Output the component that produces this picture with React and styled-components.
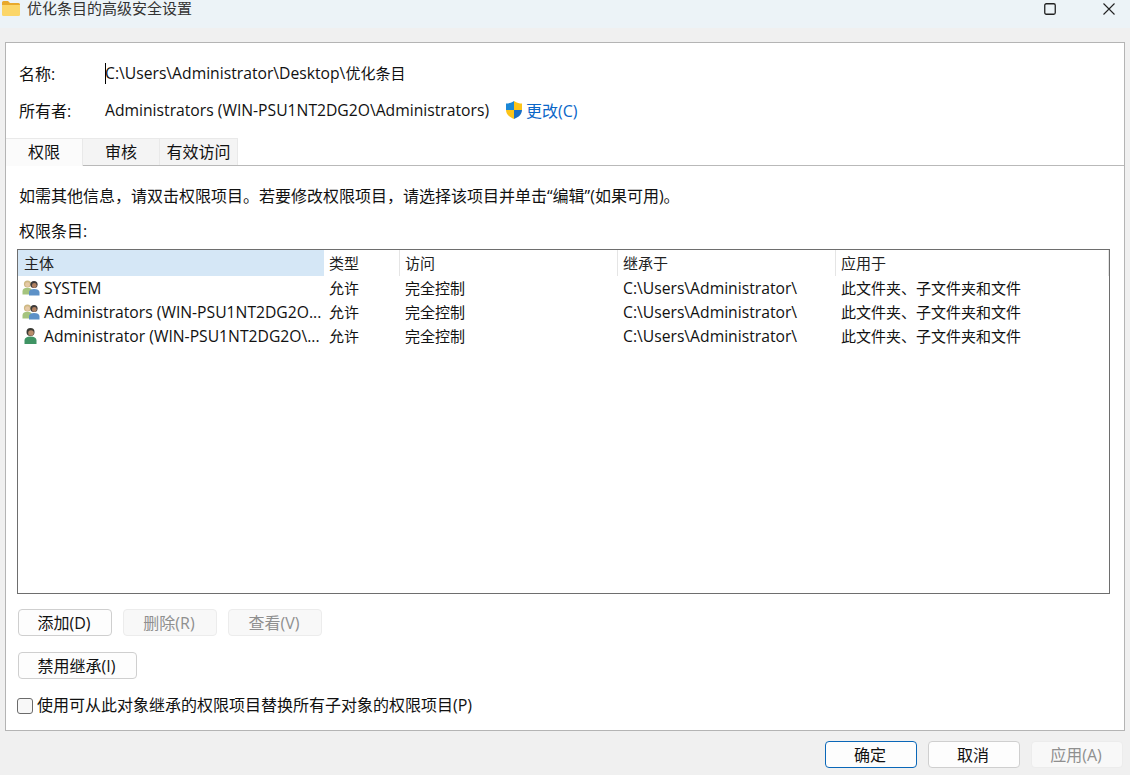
import React from 'react'
import styled, { createGlobalStyle } from 'styled-components'

const GlobalStyle = createGlobalStyle`
  html, body { margin: 0; padding: 0; background: #f0f0f0; }
  body {
    font-family: "Open Sans", "Noto Sans CJK SC", sans-serif;
    font-size: 16px;
    color: #111;
  }
`

const Window = styled.div`
  width: 1130px;
  height: 775px;
  display: flex;
  flex-direction: column;
  overflow: hidden;
  background: #f0f0f0;
`

const TitleBar = styled.div`
  height: 28px;
  flex: none;
  display: flex;
  align-items: flex-start;
  background: #ecf3f7;
  padding-left: 1px;
`

const TitleText = styled.span`
  margin-left: 6px;
  line-height: 17px;
  font-size: 15px;
  color: #333;
`

const WindowControls = styled.div`
  margin-left: auto;
  display: flex;
  gap: 47px;
  padding: 3px 15px 0 0;
  svg { display: block; }
`

const Panel = styled.div`
  margin: 14px 5px 0;
  height: 689px;
  flex: none;
  box-sizing: border-box;
  background: #fff;
  border: 1px solid #b4b4b4;
  display: flex;
  flex-direction: column;
`

const InfoRow = styled.div`
  display: flex;
  align-items: center;
  height: 24px;
  padding-left: 13px;
  margin-top: ${p => p.$top}px;
`

const InfoLabel = styled.span`
  width: 86px;
  flex: none;
`

// the Latin text of the original runs a little narrower than the CJK size next to it
const Latin = styled.span`
  font-size: 15.7px;
`

const PathValue = styled.span`
  position: relative;
  font-size: 15px;
  &::before {
    content: '';
    position: absolute;
    left: 0;
    top: 1px;
    bottom: 0;
    border-left: 1px solid #000;
  }
`

const ChangeLink = styled.span`
  margin-left: 15px;
  display: inline-flex;
  align-items: center;
  gap: 2px;
  color: #0a66c8;
`

const TabStrip = styled.div`
  margin-top: 16px;
  height: 27px;
  display: flex;
  box-sizing: content-box;
  border-bottom: 1px solid #b9b9b9;
`

const Tab = styled.div`
  width: ${p => p.$width}px;
  box-sizing: border-box;
  display: flex;
  align-items: center;
  justify-content: center;
  padding-bottom: 3px;
  background: ${p => (p.$active ? '#fbfbfb' : '#f4f4f4')};
  border: 1px solid #e9e9e9;
  border-bottom: none;
  border-left: none;
  margin-bottom: ${p => (p.$active ? '-1px' : '0')};
  position: relative;
`

const Content = styled.div`
  padding: 0 14px 0 11px;
  display: flex;
  flex-direction: column;
  flex: 1;
`

const Hint = styled.div`
  margin: 19px 0 0 2px;
  height: 22px;
  line-height: 22px;
`

const ListLabel = styled.div`
  margin: 13px 0 0 2px;
  height: 22px;
  line-height: 22px;
`

const ListBox = styled.div`
  margin-top: 7px;
  height: 345px;
  box-sizing: border-box;
  border: 1px solid #6e6e6e;
  font-size: 15px;
`

const Row = styled.div`
  display: grid;
  grid-template-columns: 306px 76px 218px 218px 1fr;
  height: ${p => (p.$header ? '26px' : '24px')};
  align-items: center;
`

const HeaderCell = styled.div`
  height: 100%;
  display: flex;
  align-items: center;
  padding-left: ${p => (p.$first ? '6px' : '5px')};
  padding-bottom: 2px;
  background: ${p => (p.$active ? '#d5e7f6' : '#fff')};
  border-right: ${p => (p.$active ? 'none' : '1px solid #e5e5e5')};
  box-sizing: border-box;
  color: #222;
`

const Cell = styled.div`
  padding-left: 5px;
  white-space: nowrap;
  overflow: hidden;
`

const CjkCell = styled(Cell)`
  padding-bottom: 2px;
`

const NameCell = styled(Cell)`
  padding-left: 4px;
  display: flex;
  align-items: center;
  gap: 4px;
  svg { flex: none; }
`

const ButtonRow = styled.div`
  display: flex;
  gap: 11px;
  margin: ${p => p.$top}px 0 0 1px;
`

const Button = styled.button`
  width: ${p => p.$width || 94}px;
  height: 27px;
  padding: 0 2px 2px 0;
  box-sizing: border-box;
  font: inherit;
  border-radius: 4px;
  background: ${p => (p.disabled ? '#f8f8f8' : '#fdfdfd')};
  color: ${p => (p.disabled ? '#8f8f8f' : '#111')};
  border: 1px solid ${p => (p.$primary ? '#0a67b8' : p.disabled ? '#ececec' : '#cfcfcf')};
`

const CheckRow = styled.label`
  display: flex;
  align-items: center;
  gap: 4px;
  margin-top: 18px;
  height: 17px;
`

const CheckBox = styled.span`
  width: 16px;
  height: 16px;
  box-sizing: border-box;
  border: 1px solid #6b6b6b;
  border-radius: 3px;
  background: #f8f8f8;
`

const CheckText = styled.span`
  padding-bottom: 4px;
`

const Footer = styled.div`
  display: flex;
  justify-content: flex-end;
  gap: 11px;
  padding: 10px 7px 0 0;
`

const FolderIcon = () => (
  <svg width="20" height="17" viewBox="0 0 20 17">
    <path d="M1 2.5 Q1 1 2.5 1 H7 L9 3 H17.5 Q19 3 19 4.5 V6 H1 Z" fill="#e8a92c" />
    <path d="M1 5 H19 V14.5 Q19 16 17.5 16 H2.5 Q1 16 1 14.5 Z" fill="#fbd668" />
  </svg>
)

const ShieldIcon = () => (
  <svg width="20" height="20" viewBox="0 0 20 20">
    <path d="M10 1 C7 3 4.5 3.5 2 3.5 V10 H10 Z" fill="#1b87d6" />
    <path d="M10 1 C13 3 15.5 3.5 18 3.5 V10 H10 Z" fill="#fcc419" />
    <path d="M2 10 C2 14.5 6 17.5 10 19 V10 Z" fill="#fcc419" />
    <path d="M18 10 C18 14.5 14 17.5 10 19 V10 Z" fill="#1b6fc4" />
  </svg>
)

const GroupIcon = () => (
  <svg width="18" height="18" viewBox="0 0 18 18">
    <circle cx="5.5" cy="5" r="3.6" fill="#cdb883" />
    <circle cx="5.5" cy="5.6" r="2.4" fill="#e6c9a6" />
    <path d="M0.5 15.5 V12 Q1 8.8 5.5 8.8 Q9 8.8 10 11 V15.5 Z" fill="#a5c47e" />
    <circle cx="12" cy="5.5" r="3.6" fill="#3d3a3a" />
    <circle cx="12.3" cy="6.5" r="2.4" fill="#b08060" />
    <path d="M7 16.5 V13 Q7.5 10 12 10 Q17 10 17.5 13 V16.5 Z" fill="#5d91c7" />
  </svg>
)

const UserIcon = () => (
  <svg width="18" height="18" viewBox="0 0 18 18">
    <circle cx="8.5" cy="5" r="4" fill="#3a3a34" />
    <circle cx="9" cy="6" r="2.8" fill="#b98d6c" />
    <path d="M2.5 17 V13 Q3 9.5 8.5 9.5 Q14 9.5 14.5 13 V17 Z" fill="#3f9464" />
  </svg>
)

const COLUMNS = ['主体', '类型', '访问', '继承于', '应用于']

const ROWS = [
  { icon: <GroupIcon />, name: 'SYSTEM' },
  { icon: <GroupIcon />, name: 'Administrators (WIN-PSU1NT2DG2O...' },
  { icon: <UserIcon />, name: 'Administrator (WIN-PSU1NT2DG2O\\...' },
]

const App = () => (
  <Window>
    <GlobalStyle />
    <TitleBar>
      <FolderIcon />
      <TitleText>优化条目的高级安全设置</TitleText>
      <WindowControls>
        <svg width="12" height="12" viewBox="0 0 12 12">
          <rect x="0.75" y="0.75" width="10.5" height="10.5" rx="1.5" fill="none" stroke="#222" strokeWidth="1.3" />
        </svg>
        <svg width="12" height="12" viewBox="0 0 12 12">
          <path d="M0.5 0.5 L11.5 11.5 M11.5 0.5 L0.5 11.5" stroke="#222" strokeWidth="1.1" />
        </svg>
      </WindowControls>
    </TitleBar>
    <Panel>
      <InfoRow $top={18}>
        <InfoLabel>名称:</InfoLabel>
        <PathValue><Latin>C:\Users\Administrator\Desktop\</Latin>优化条目</PathValue>
      </InfoRow>
      <InfoRow $top={13}>
        <InfoLabel>所有者:</InfoLabel>
        <Latin>Administrators (WIN-PSU1NT2DG2O\Administrators)</Latin>
        <ChangeLink><ShieldIcon />更改(C)</ChangeLink>
      </InfoRow>
      <TabStrip>
        <Tab $active $width={77}>权限</Tab>
        <Tab $width={77}>审核</Tab>
        <Tab $width={78}>有效访问</Tab>
      </TabStrip>
      <Content>
        <Hint>如需其他信息，请双击权限项目。若要修改权限项目，请选择该项目并单击“编辑”(如果可用)。</Hint>
        <ListLabel>权限条目:</ListLabel>
        <ListBox>
          <Row $header>
            {COLUMNS.map((col, i) => (
              <HeaderCell key={col} $active={i === 0} $first={i === 0}>{col}</HeaderCell>
            ))}
          </Row>
          {ROWS.map(row => (
            <Row key={row.name}>
              <NameCell>{row.icon}<Latin>{row.name}</Latin></NameCell>
              <CjkCell>允许</CjkCell>
              <CjkCell>完全控制</CjkCell>
              <Cell><Latin>C:\Users\Administrator\</Latin></Cell>
              <CjkCell>此文件夹、子文件夹和文件</CjkCell>
            </Row>
          ))}
        </ListBox>
        <ButtonRow $top={15}>
          <Button>添加(D)</Button>
          <Button disabled>删除(R)</Button>
          <Button disabled>查看(V)</Button>
        </ButtonRow>
        <ButtonRow $top={16}>
          <Button $width={119}>禁用继承(I)</Button>
        </ButtonRow>
        <CheckRow>
          <CheckBox />
          <CheckText>使用可从此对象继承的权限项目替换所有子对象的权限项目(P)</CheckText>
        </CheckRow>
      </Content>
    </Panel>
    <Footer>
      <Button $primary $width={92}>确定</Button>
      <Button $width={92}>取消</Button>
      <Button disabled $width={92}>应用(A)</Button>
    </Footer>
  </Window>
)

export default App
